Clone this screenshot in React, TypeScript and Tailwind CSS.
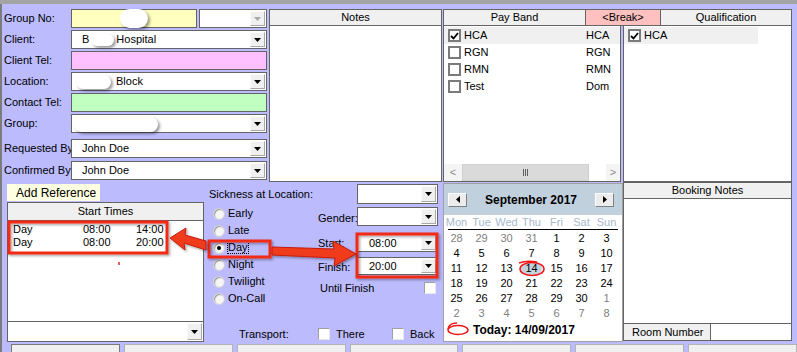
import React from 'react';

const BD = 'border-[#646464]';

function DropBtn({ dim }: { dim?: boolean }) {
  return (
    <div className="w-[15px] m-[1px] shrink-0 self-stretch bg-[#f0f0f0] border border-[#fbfbfb] border-r-[#a8a8a8] border-b-[#a8a8a8] flex items-center justify-center">
      <svg width="7" height="4" viewBox="0 0 7 4">
        <polygon points="0,0 7,0 3.5,4" fill={dim ? '#a8a8a8' : '#000'} />
      </svg>
    </div>
  );
}

function Combo({
  value,
  cls = '',
  dim,
  pad = 'pl-[10px]',
  children,
}: {
  value?: React.ReactNode;
  cls?: string;
  dim?: boolean;
  pad?: string;
  children?: React.ReactNode;
}) {
  return (
    <div className={`relative flex bg-white border ${BD} ${cls}`}>
      <div className={`flex-1 flex items-center overflow-hidden whitespace-nowrap ${pad}`}>{value}</div>
      <DropBtn dim={dim} />
      {children}
    </div>
  );
}

function Blob({ cls }: { cls: string }) {
  return <div className={`absolute bg-white rounded-full shadow-[2px_2px_3px_rgba(0,0,0,0.4)] ${cls}`} />;
}

function Row({ label, mt, children }: { label: string; mt: string; children: React.ReactNode }) {
  return (
    <div className={`flex h-[19px] ${mt}`}>
      <div className="w-[67px] flex items-center whitespace-nowrap">{label}</div>
      <div className="flex-1 flex">{children}</div>
    </div>
  );
}

function Check({ on }: { on?: boolean }) {
  return (
    <div className="w-[13px] h-[13px] shrink-0 border-2 border-[#7b7b7b] bg-white flex items-center justify-center">
      {on && (
        <svg width="9" height="8" viewBox="0 0 9 8">
          <path d="M1 4l2.5 2.5L8 1" stroke="#000" strokeWidth="1.8" fill="none" />
        </svg>
      )}
    </div>
  );
}

function Box() {
  return <div className="w-[12px] h-[12px] shrink-0 bg-white border border-[#a0a0a0] border-r-[#e8e8e8] border-b-[#e8e8e8]" />;
}

function Radio({ label, on }: { label: string; on?: boolean }) {
  return (
    <div className="flex items-center h-[17px]">
      <div className="w-[12px] h-[12px] rounded-full bg-[#f6f6f6] border border-[#d0d0d0] shadow-[inset_1px_1px_1px_#9a9a9a] flex items-center justify-center">
        {on && <div className="w-[4px] h-[4px] rounded-full bg-black" />}
      </div>
      <span className={`ml-[3px] ${on ? 'outline outline-1 outline-dotted outline-black' : ''}`}>{label}</span>
    </div>
  );
}

const payBands = [
  ['HCA', 'HCA', true],
  ['RGN', 'RGN', false],
  ['RMN', 'RMN', false],
  ['Test', 'Dom', false],
] as const;

const weeks: [number, boolean][][] = [
  [[28, true], [29, true], [30, true], [31, true], [1, false], [2, false], [3, false]],
  [4, 5, 6, 7, 8, 9, 10].map((d) => [d, false]),
  [11, 12, 13, 14, 15, 16, 17].map((d) => [d, false]),
  [18, 19, 20, 21, 22, 23, 24].map((d) => [d, false]),
  [[25, false], [26, false], [27, false], [28, false], [29, false], [30, false], [1, true]],
  [2, 3, 4, 5, 6, 7, 8].map((d) => [d, true]),
];

function Calendar() {
  return (
    <div className="w-[180px] h-[159px] mt-[1px] bg-white border border-[#a0a0a0] flex flex-col">
      <div className="h-[31px] bg-[#c0d0dc] flex items-center justify-between px-[4px]">
        <div className="w-[19px] h-[14px] bg-[#ececec] border border-[#fff] border-r-[#808080] border-b-[#808080] flex items-center justify-center">
          <svg width="4" height="7" viewBox="0 0 4 7"><polygon points="4,0 4,7 0,3.5" fill="#000" /></svg>
        </div>
        <div className="font-bold text-[12px]">September 2017</div>
        <div className="w-[19px] h-[14px] mr-[4px] bg-[#ececec] border border-[#fff] border-r-[#808080] border-b-[#808080] flex items-center justify-center">
          <svg width="4" height="7" viewBox="0 0 4 7"><polygon points="0,0 0,7 4,3.5" fill="#000" /></svg>
        </div>
      </div>
      <div className="flex h-[14px] items-center text-[#a6b8cc]">
        {['Mon', 'Tue', 'Wed', 'Thu', 'Fri', 'Sat', 'Sun'].map((d) => (
          <div key={d} className="w-[25px] text-center">{d}</div>
        ))}
      </div>
      <div className="mx-[4px] h-[1px] bg-black" />
      <div className="mt-[1px]">
        {weeks.map((w, i) => (
          <div key={i} className="flex h-[15px] items-center">
            {w.map(([d, g], j) => (
              <div key={j} className={`w-[25px] flex justify-center ${g ? 'text-[#808080]' : ''}`}>
                {i === 2 && d === 14 ? (
                  <span className="bg-[#c4d2de] rounded-full px-[4px] py-[1px]">{d}</span>
                ) : (
                  d
                )}
              </div>
            ))}
          </div>
        ))}
      </div>
      <div className="flex items-center h-[15px] mt-[1px] pl-[29px] font-bold text-[12px]">Today: 14/09/2017</div>
    </div>
  );
}

export default function App() {
  return (
    <div className="relative w-[797px] h-[352px] overflow-hidden bg-[#bbbbfe] font-['Liberation_Sans',Arial,sans-serif] text-[11px] text-black leading-none">
      <div className="h-[4px] bg-[#a4a4a4]" />
      <div className="h-[348px] border-l-2 border-[#7c7c7c] flex flex-col">
        {/* top section */}
        <div className="flex h-[179px] pt-[5px]">
          <div className="w-[265px] pl-[2px]">
            <Row label="Group No:" mt="">
              <div className={`relative w-[126px] bg-[#ffffc0] border ${BD}`}>
                <Blob cls="left-[48px] top-[-1px] w-[28px] h-[19px]" />
              </div>
              <Combo cls="ml-[2px] flex-1" dim />
            </Row>
            <Row label="Client:" mt="mt-[2px]">
              <Combo
                cls="flex-1"
                value={
                  <>
                    <span>B</span>
                    <span className="ml-[27px]">Hospital</span>
                  </>
                }
              >
                <Blob cls="left-[19px] top-[3px] w-[23px] h-[12px]" />
              </Combo>
            </Row>
            <Row label="Client Tel:" mt="mt-[2px]">
              <div className={`flex-1 bg-[#ffc0ff] border ${BD}`} />
            </Row>
            <Row label="Location:" mt="mt-[2px]">
              <Combo cls="flex-1" pad="pl-[44px]" value="Block">
                <Blob cls="left-[4px] top-[2px] w-[35px] h-[14px]" />
              </Combo>
            </Row>
            <Row label="Contact Tel:" mt="mt-[2px]">
              <div className={`flex-1 bg-[#c0ffc0] border ${BD}`} />
            </Row>
            <Row label="Group:" mt="mt-[2px]">
              <Combo cls="flex-1">
                <Blob cls="left-[2px] top-[2px] w-[84px] h-[15px]" />
              </Combo>
            </Row>
            <Row label="Requested By" mt="mt-[6px]">
              <Combo cls="flex-1" value="John Doe" />
            </Row>
            <Row label="Confirmed By:" mt="mt-[3px]">
              <Combo cls="flex-1" value="John Doe" />
            </Row>
          </div>

          <div className={`ml-[2px] w-[173px] h-[173px] flex flex-col border ${BD} bg-white`}>
            <div className={`h-[16px] bg-[#f0f0f0] border-b ${BD} flex items-center justify-center`}>Notes</div>
          </div>

          <div className="ml-[1px] w-[349px] h-[173px] flex flex-col">
            <div className="flex h-[17px]">
              <div className={`w-[143px] bg-[#f0f0f0] border ${BD} flex items-center justify-center`}>Pay Band</div>
              <div className={`w-[75px] bg-[#ffc0c0] border border-l-0 ${BD} flex items-center justify-center`}>&lt;Break&gt;</div>
              <div className={`w-[131px] bg-[#f0f0f0] border border-l-0 ${BD} flex items-center justify-center`}>Qualification</div>
            </div>
            <div className="flex flex-1">
              <div className={`w-[178px] bg-white border border-t-0 ${BD} flex flex-col`}>
                <div className="flex-1 pt-[1px]">
                  {payBands.map(([a, b, on]) => (
                    <div key={a} className={`flex items-center h-[17px] pl-[4px] ${on ? 'bg-[#f0f0f0]' : ''}`}>
                      <Check on={on} />
                      <span className="ml-[3px] w-[122px]">{a}</span>
                      <span>{b}</span>
                    </div>
                  ))}
                </div>
                <div className="flex h-[17px] bg-[#f4f4f4]">
                  <div className="w-[18px] flex items-center justify-center text-[#8a8a8a]">&lt;</div>
                  <div className="w-[127px] bg-[#dadada] border border-[#cfcfcf] flex items-center justify-center gap-[1px]">
                    <div className="w-[1px] h-[7px] bg-[#606060]" />
                    <div className="w-[1px] h-[7px] bg-[#606060]" />
                    <div className="w-[1px] h-[7px] bg-[#606060]" />
                  </div>
                  <div className="w-[17px] bg-white" />
                  <div className="flex-1 flex items-center justify-center text-[#8a8a8a]">&gt;</div>
                </div>
              </div>
              <div className={`ml-[2px] w-[169px] bg-white border border-t-0 ${BD} pt-[1px]`}>
                <div className="flex items-center h-[17px] pl-[4px] w-[134px] bg-[#f0f0f0]">
                  <Check on />
                  <span className="ml-[3px]">HCA</span>
                </div>
              </div>
            </div>
          </div>
        </div>

        {/* bottom section */}
        <div className="flex h-[161px]">
          <div className="w-[205px] pl-[5px]">
            <div className="mt-[2px] w-[93px] h-[17px] bg-[#ffffe1] flex items-center pl-[9px] text-[12px]">Add Reference</div>
            <div className={`mt-[1px] w-[197px] h-[120px] bg-white border ${BD} flex flex-col`}>
              <div className={`h-[18px] bg-[#f0f0f0] border-b ${BD} flex items-center justify-center`}>Start Times</div>
              <div className="pt-[2px]">
                {[['08:00', '14:00'], ['08:00', '20:00']].map(([s, f], i) => (
                  <div key={i} className="flex h-[13px] items-center pl-[5px]">
                    <span className="w-[70px]">Day</span>
                    <span className="w-[53px]">{s}</span>
                    <span>{f}</span>
                  </div>
                ))}
              </div>
            </div>
            <Combo cls="w-[197px] h-[20px] border-t-0" />
          </div>

          <div className="w-[236px] flex flex-col">
            <div className="flex h-[22px] items-center justify-between pl-[2px] pr-[5px]">
              <span className="mt-[2px]">Sickness at Location:</span>
              <Combo cls="w-[81px] h-[20px] mt-[2px]" />
            </div>
            <div className="flex">
              <div className="w-[111px] pl-[6px] mt-[1px]">
                <Radio label="Early" />
                <Radio label="Late" />
                <Radio label="Day" on />
                <Radio label="Night" />
                <Radio label="Twilight" />
                <Radio label="On-Call" />
              </div>
              <div className="w-[125px]">
                <div className="flex mt-[3px] h-[19px]">
                  <span className="w-[39px] flex items-center mt-[3px]">Gender:</span>
                  <Combo cls="w-[81px]" />
                </div>
                <div className="flex mt-[8px] h-[18px]">
                  <span className="w-[39px] flex items-center">Start:</span>
                  <Combo cls="w-[81px]" pad="pl-[11px]" value="08:00" />
                </div>
                <div className="flex mt-[5px] h-[18px]">
                  <span className="w-[39px] flex items-center mt-[3px]">Finish:</span>
                  <Combo cls="w-[81px]" pad="pl-[11px]" value="20:00" />
                </div>
                <div className="flex mt-[7px] h-[12px] items-center justify-between pl-[2px] pr-[7px]">
                  <span>Until Finish</span>
                  <Box />
                </div>
              </div>
            </div>
            <div className="mt-auto mb-[2px] flex h-[12px] items-center pl-[32px]">
              <span className="w-[79px]">Transport:</span>
              <div className="w-[74px] flex items-center">
                <Box />
                <span className="ml-[6px]">There</span>
              </div>
              <Box />
              <span className="ml-[6px]">Back</span>
            </div>
          </div>

          <Calendar />

          <div className={`w-[169px] h-[159px] bg-white border ${BD} flex flex-col`}>
            <div className={`h-[16px] bg-[#f0f0f0] border-b ${BD} flex items-center justify-center`}>Booking Notes</div>
            <div className="flex-1" />
            <div className={`h-[17px] flex border-t ${BD}`}>
              <div className={`w-[87px] bg-[#f0f0f0] border-r ${BD} flex items-center pl-[8px]`}>Room Number</div>
            </div>
          </div>
        </div>

        {/* tabs */}
        <div className="flex gap-[4px] pl-[9px] mt-[2px]">
          {[0, 1, 2, 3, 4, 5, 6].map((i) => (
            <div
              key={i}
              className={`w-[112px] h-[10px] bg-[#f0f0f0] border border-b-0 ${i === 0 ? 'border-[#7a7a7a]' : 'border-[#b4b4b4]'}`}
            />
          ))}
        </div>
      </div>

      {/* annotations */}
      <svg className="absolute left-0 top-0 pointer-events-none" width="797" height="352" viewBox="0 0 797 352">
        <defs>
          <filter id="sh" x="-20%" y="-20%" width="140%" height="140%">
            <feDropShadow dx="1.5" dy="1.5" stdDeviation="1" floodColor="#000" floodOpacity="0.35" />
          </filter>
        </defs>
        <g filter="url(#sh)" fill="none" stroke="#f02a14" strokeWidth="3">
          <rect x="9" y="222" width="158" height="31" />
          <rect x="209" y="241" width="61" height="16" />
          <rect x="357" y="234" width="80" height="43" />
        </g>
        <g filter="url(#sh)" fill="#f03a1e" stroke="#c41c0c" strokeWidth="1" strokeLinejoin="round">
          <polygon points="170,238 186,228 185,235 206,241 206,250 184,243 185,250" />
          <polygon points="272,247 334,249 333,241 356,254 334,266 335,258 272,255" />
        </g>
        <g fill="none" stroke="#f01414" strokeWidth="1.5">
          <ellipse cx="532" cy="269" rx="12" ry="6.5" />
          <path d="M519 263 Q527 260 537 262" />
          <ellipse cx="458" cy="330" rx="10" ry="4.5" />
          <path d="M448 329 Q449 323 457 323" />
        </g>
        <rect x="118" y="262" width="2" height="3" fill="#f06050" />
      </svg>
    </div>
  );
}
